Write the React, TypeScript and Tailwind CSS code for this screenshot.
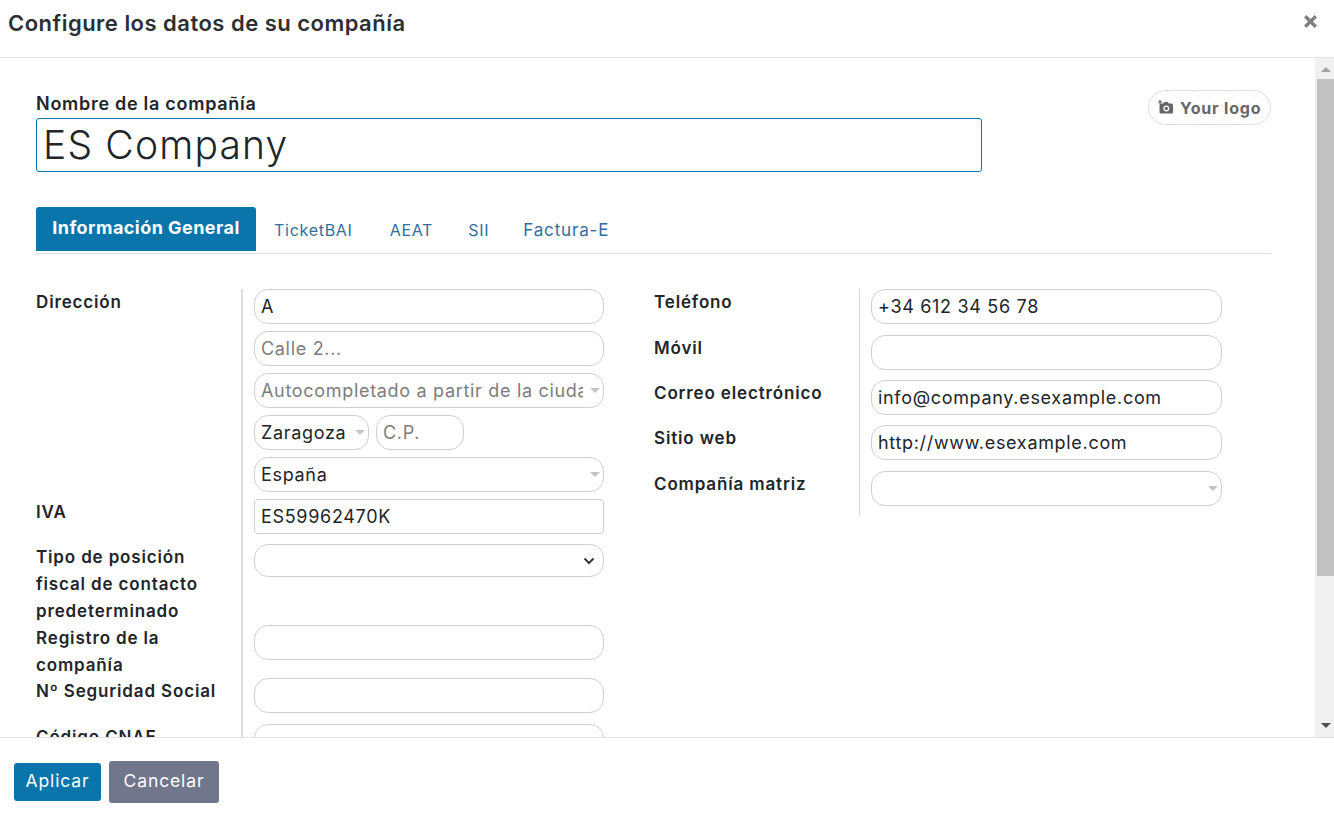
import React from "react";

const font = { fontFamily: "Inter, 'Liberation Sans', sans-serif" };

const inputBase =
  "block w-full h-[35px] border border-[#cfcfcf] bg-white pl-[6px] pr-[6px] pb-[1px] text-[18px] tracking-[0.038em] text-[#212529] placeholder:text-[#7d7d7d] outline-none";

function Field({
  value = "",
  placeholder,
  caret,
  className = "",
  square,
  pr,
}: {
  value?: string;
  placeholder?: string;
  caret?: boolean;
  className?: string;
  square?: boolean;
  pr?: string;
}) {
  return (
    <div className={`relative ${className}`}>
      <input
        readOnly
        value={value}
        placeholder={placeholder}
        className={`${inputBase} ${square ? "rounded-[4px]" : "rounded-[14px]"} ${pr ?? ""}`}
      />
      {caret && (
        <span className="absolute right-[4px] top-[15px] h-0 w-0 border-x-[5px] border-t-[5px] border-x-transparent border-t-[#c4c4c4]" />
      )}
    </div>
  );
}

function Label({ children, className = "" }: { children: React.ReactNode; className?: string }) {
  return (
    <div className={`text-[17px] leading-[27px] font-semibold tracking-[0.05em] text-[#212529] ${className}`}>
      {children}
    </div>
  );
}

function CameraPlus() {
  return (
    <svg width="16" height="15" viewBox="0 0 16 15" className="shrink-0">
      <path
        d="M3 3.500h2.200L6.200 2h3.600l1 1.500H13.500a1.500 1.500 0 0 1 1.500 1.500v7a1.500 1.500 0 0 1-1.500 1.500h-10.500a1.500 1.500 0 0 1-1.500-1.500V5a1.500 1.500 0 0 1 1.500-1.500z"
        fill="#666"
      />
      <circle cx="8.300" cy="8.500" r="3" fill="#fff" />
      <circle cx="8.300" cy="8.500" r="1.700" fill="#666" />
      <path d="M2 0v4M0 2h4" stroke="#666" strokeWidth="1.200" />
    </svg>
  );
}

const rightRows: { label: string; value: string; caret: boolean; h: string }[] = [
  { label: "Teléfono", value: "+34 612 34 56 78", caret: false, h: "h-[46px]" },
  { label: "Móvil", value: "", caret: false, h: "h-[45px]" },
  { label: "Correo electrónico", value: "info@company.esexample.com", caret: false, h: "h-[45px]" },
  { label: "Sitio web", value: "http://www.esexample.com", caret: false, h: "h-[46px]" },
  { label: "Compañía matriz", value: "", caret: true, h: "h-[45px]" },
];

const valueCell = "border-l-2 border-[#dcdcdc] pl-[11px]";

export default function App() {
  return (
    <div style={font} className="flex h-[819px] w-[1334px] flex-col overflow-hidden bg-white text-[#212529]">
      <header className="flex h-[58px] shrink-0 items-start justify-between border-b border-[#e3e3e3] pl-[8px] pr-[17px]">
        <h1 className="pt-[8px] text-[22px] leading-[30px] font-semibold tracking-[0.022em] text-[#2b2f33]">
          Configure los datos de su compañía
        </h1>
        <svg width="13" height="13" viewBox="0 0 13 13" className="mt-[15px]">
          <path d="M1.200 1.200l10.600 10.600M11.800 1.200l-10.600 10.600" stroke="#808080" strokeWidth="3.400" />
        </svg>
      </header>

      <div className="flex min-h-0 flex-1">
        <main className="min-w-0 flex-1 overflow-hidden pl-[36px] pr-[44px] pt-[32px]">
          <div className="flex items-start justify-between">
            <div className="w-[946px]">
              <div className="h-[28px] text-[18px] leading-[27px] font-semibold tracking-[0.04em]">Nombre de la compañía</div>
              <input
                readOnly
                value="ES Company"
                className="block h-[54px] w-full rounded-[3px] border border-[#0b75ab] px-[6px] text-[39px] font-light tracking-[0.03em] text-[#212529] outline-none"
              />
            </div>
            <div className="flex h-[35px] w-[123px] items-center gap-[6px] rounded-full border border-[#dcdfe2] bg-[repeating-linear-gradient(135deg,#ffffff,#ffffff_6px,#fafafa_6px,#fafafa_8px)] pl-[9px] text-[16px] font-bold tracking-[0.05em] text-[#666666]">
              <CameraPlus />
              <span>Your logo</span>
            </div>
          </div>

          <nav className="mt-[35px] flex h-[47px] items-start border-b border-[#e0e0e0]">
            <div className="flex h-[44px] w-[220px] items-center justify-center rounded-t-[3px] bg-[#0a75ab] pb-[3px] text-[18px] font-bold tracking-[0.025em] text-white">
              Información General
            </div>
            <div className="flex h-[44px] items-baseline pl-[18px] pt-[11px] text-[16px] tracking-[0.045em] text-[#2f6f9f]">
              <span>TicketBAI</span>
              <span className="ml-[37px]">AEAT</span>
              <span className="ml-[35px]">SII</span>
              <span className="ml-[34px] text-[17px] tracking-[0.05em]">Factura-E</span>
            </div>
          </nav>

          <div className="mt-[35px] flex items-start">
            <div className="grid w-[568px] grid-cols-[205px_1fr]">
              <Label className="h-[210px]">Dirección</Label>
              <div className={`flex h-[210px] flex-col gap-[7px] ${valueCell}`}>
                <Field value="A" />
                <Field placeholder="Calle 2..." />
                <Field placeholder="Autocompletado a partir de la ciudad" caret pr="!pr-[20px]" />
                <div className="flex gap-[7px]">
                  <Field value="Zaragoza" caret className="w-[115px]" pr="!pr-[20px]" />
                  <Field placeholder="C.P." className="w-[88px]" />
                </div>
                <Field value="España" caret />
              </div>

              <Label className="h-[45px]">IVA</Label>
              <div className={`h-[45px] ${valueCell}`}>
                <Field value="ES59962470K" square />
              </div>

              <Label className="h-[81px]">
                Tipo de posición
                <br />
                fiscal de contacto
                <br />
                predeterminado
              </Label>
              <div className={`h-[81px] ${valueCell}`}>
                <div className="relative">
                  <input readOnly className={`${inputBase} !h-[33px] rounded-[14px]`} />
                  <svg width="12" height="8" viewBox="0 0 12 8" className="absolute right-[9px] top-[13px]">
                    <path d="M1.500 1.500 6 6l4.500-4.500" fill="none" stroke="#343a40" strokeWidth="2" />
                  </svg>
                </div>
              </div>

              <Label className="h-[53px]">
                Registro de la
                <br />
                compañía
              </Label>
              <div className={`h-[53px] ${valueCell}`}>
                <Field />
              </div>

              <Label className="h-[46px]">Nº Seguridad Social</Label>
              <div className={`h-[46px] ${valueCell}`}>
                <Field />
              </div>

              <Label className="h-[46px]">Código CNAE</Label>
              <div className={`h-[46px] ${valueCell}`}>
                <Field />
              </div>
            </div>

            <div className="ml-[50px] grid w-[568px] grid-cols-[205px_1fr]">
              {rightRows.map((row) => (
                <React.Fragment key={row.label}>
                  <Label className={row.h}>{row.label}</Label>
                  <div className={`${row.h} border-l border-[#d5d5d5] pl-[11px]`}>
                    <Field value={row.value} caret={row.caret} className="w-[351px]" />
                  </div>
                </React.Fragment>
              ))}
            </div>
          </div>
        </main>

        <div className="flex w-[19px] shrink-0 flex-col items-end bg-[#f0f0f0]">
          <div className="flex h-[21px] w-full items-center justify-center pl-[2px] pt-[2px]">
            <span className="h-0 w-0 border-x-[5px] border-b-[5px] border-x-transparent border-b-[#a3a3a3]" />
          </div>
          <div className="h-[497px] w-[17px] bg-[#c1c1c1]" />
          <div className="mt-auto flex h-[24px] w-full items-center justify-center pl-[2px]">
            <span className="h-0 w-0 border-x-[5px] border-t-[5px] border-x-transparent border-t-[#505050]" />
          </div>
        </div>
      </div>

      <footer className="flex h-[82px] shrink-0 items-center gap-[8px] border-t border-[#e3e3e3] bg-white pl-[14px] pt-[6px]">
        <button className="h-[38px] w-[87px] rounded-[3px] bg-[#0a75ab] text-[17.500px] tracking-[0.05em] text-white">
          Aplicar
        </button>
        <button className="h-[42px] w-[110px] rounded-[3px] bg-[#71768b] text-[17.500px] tracking-[0.05em] text-white">
          Cancelar
        </button>
      </footer>
    </div>
  );
}
